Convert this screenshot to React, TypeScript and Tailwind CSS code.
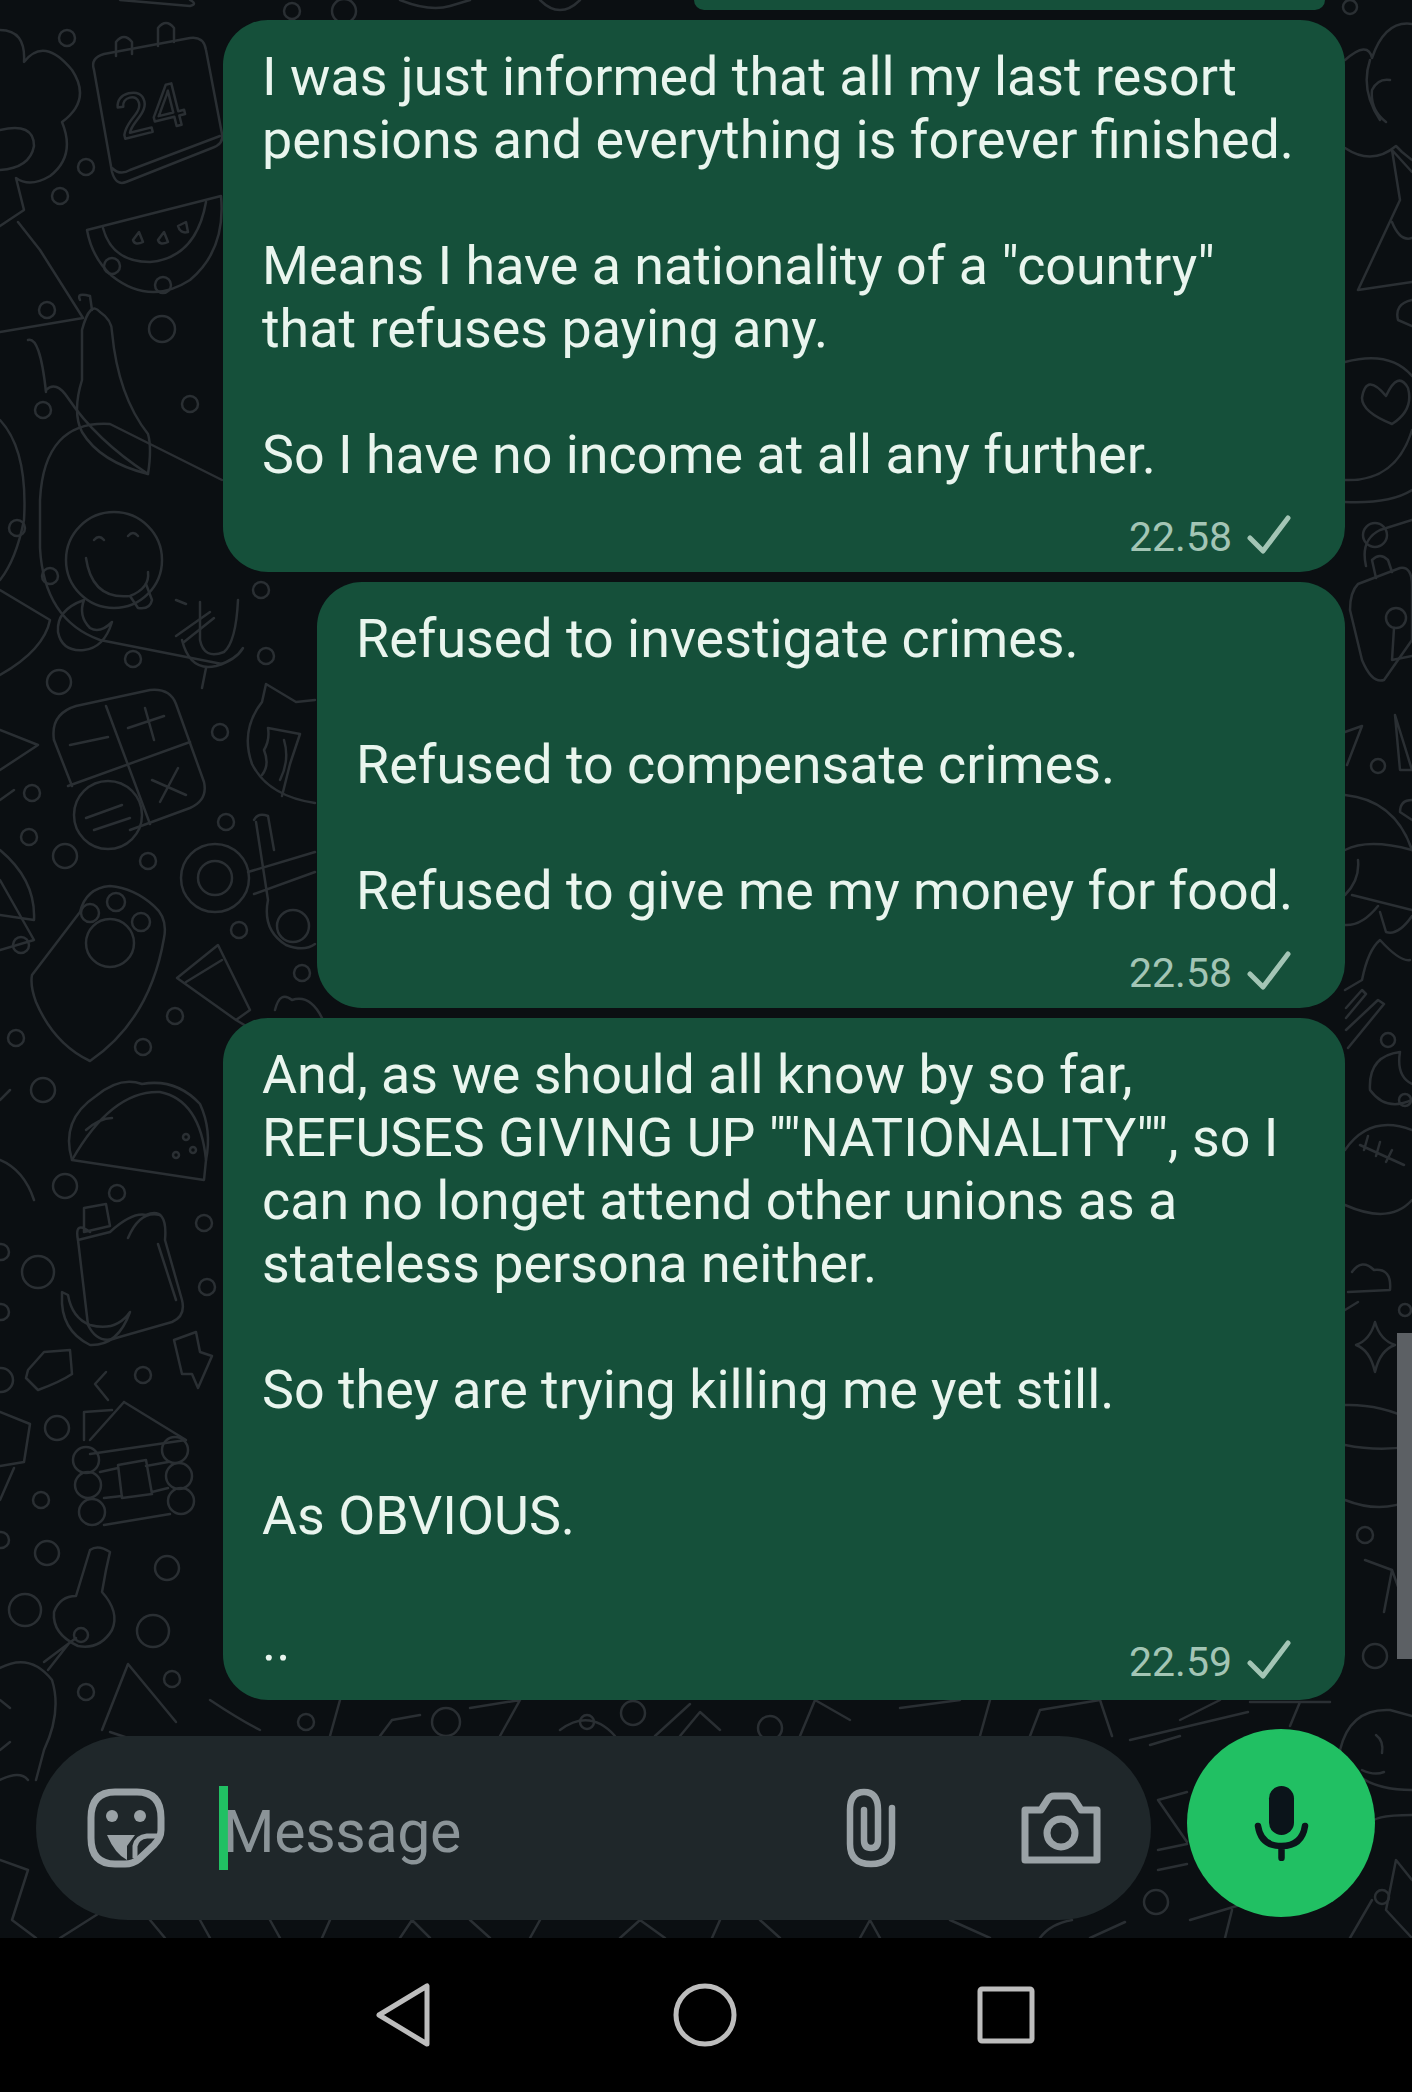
import React from "react";

// small bubbles scattered over the chat wallpaper: [cx, cy, r]
const DOTS: [number, number, number][] = [
  [67, 38, 8], [86, 167, 8], [60, 196, 8], [112, 266, 8], [163, 285, 8], [47, 310, 8],
  [162, 329, 13], [43, 410, 8], [190, 404, 8], [17, 528, 8], [50, 576, 8], [261, 590, 8],
  [292, 11, 8], [344, 11, 12], [133, 659, 8], [59, 682, 12], [266, 656, 8], [220, 732, 8],
  [32, 793, 8], [29, 837, 8], [65, 856, 12], [148, 861, 8], [226, 822, 8], [239, 930, 8],
  [21, 945, 8], [175, 1016, 8], [16, 1038, 8], [143, 1047, 8], [302, 973, 8], [43, 1090, 12],
  [65, 1186, 12], [117, 1193, 8], [204, 1223, 8], [38, 1272, 16], [207, 1287, 8], [143, 1375, 8],
  [57, 1428, 12], [41, 1500, 8], [47, 1553, 12], [167, 1568, 12], [25, 1610, 16], [153, 1631, 16],
  [172, 1679, 8], [86, 1692, 8], [1375, 535, 12], [1378, 766, 7], [1350, 7, 7], [1388, 1040, 7],
  [1365, 1535, 8], [1375, 1656, 12], [306, 1722, 8], [446, 1722, 14], [587, 1722, 7], [633, 1713, 12],
  [770, 1728, 12], [1156, 1902, 12], [1382, 1897, 7], [1, 1252, 8], [1, 1312, 8], [1, 1380, 12],
  [1, 1540, 8], [1405, 1100, 6], [1405, 1310, 6],
];

const Wallpaper = () => (
  <svg
    className="absolute inset-0 h-full w-full"
    viewBox="0 0 1412 1938"
    fill="none"
    stroke="#2a2f33"
    strokeWidth={2.5}
    strokeLinecap="round"
    strokeLinejoin="round"
  >
    {DOTS.map(([cx, cy, r], i) => (
      <circle key={i} cx={cx} cy={cy} r={r} />
    ))}
    {/* calendar */}
    <path d="M94 70Q90 58 104 54L190 38Q204 36 206 50L222 134Q224 144 212 148L126 182Q116 186 112 172Z" />
    <path d="M112 168Q120 176 130 170L220 136" />
    <path d="M116 56V42Q124 32 132 42V54M158 46V28Q166 18 174 28V42" />
    <text x="116" y="132" fontSize="62" fontFamily="Liberation Sans, sans-serif" transform="rotate(-14 150 110)">24</text>
    {/* broccoli */}
    <path d="M0 30Q26 30 24 62Q44 36 72 70Q92 100 62 122Q76 156 50 176Q30 188 16 178L24 210L0 226" />
    <path d="M0 130Q34 122 34 146Q30 168 0 170" />
    {/* pizza slice */}
    <path d="M0 332L83 318L40 250L18 222" />
    {/* watermelon */}
    <path d="M87 230L221 196Q226 250 190 280Q150 306 112 276Q92 258 87 230Z" />
    <path d="M103 228Q112 262 150 262Q196 258 206 202" />
    <path d="M133 240l6-8 4 10q-8 4-10-2zM158 240l6-8 4 10q-8 4-10-2zM178 226l8-4 2 10q-8 2-10-6z" />
    {/* chillies */}
    <path d="M82 330Q90 300 100 312Q112 320 112 332Q118 396 148 434Q152 448 148 474Q100 462 82 432Q72 412 82 380Z" />
    <path d="M46 390Q56 380 68 398Q96 440 148 474" />
    <path d="M80 300Q76 292 90 296L92 310M28 340Q40 336 46 392" />
    {/* blob with smiley */}
    <path d="M222 480L110 424Q44 420 40 500V548Q44 620 100 640L222 664" />
    <circle cx="114" cy="560" r="48" />
    <path d="M86 558Q92 600 130 596Q150 588 148 572M94 540q5-6 10 0M128 536q5-6 10 0" />
    <path d="M130 596l8 12q12 2 14-8l-6-16" />
    <path d="M176 636L210 612M184 642L214 618" />
    {/* left edge shapes */}
    <path d="M0 420Q28 450 24 520Q16 560 0 580" />
    <path d="M0 590L50 620Q44 650 0 675" />
    <path d="M0 800L14 790M0 880L34 940L0 950" />
    {/* moon */}
    <path d="M84 600Q56 610 58 632Q62 652 84 650Q104 648 112 622Q100 634 90 628Q78 616 84 600Z" />
    {/* mic */}
    <path d="M200 602V640Q204 660 224 652Q236 642 238 600" />
    <path d="M182 640Q190 672 216 666Q236 660 243 648M206 668L202 688" />
    <path d="M176 600L186 604M0 730L38 745L0 770" />
    {/* calculator */}
    <path d="M54 740Q50 714 76 706L150 690Q170 688 176 704L204 782Q208 800 190 808L130 830" />
    <path d="M54 740L72 786M106 706L150 824M68 786L190 742M70 745L108 737M128 728L164 716M145 708L154 740M152 780L186 795M178 768L160 802" />
    <circle cx="108" cy="815" r="34" />
    <path d="M86 818L122 805M94 830L130 818" />
    {/* cat */}
    <path d="M315 803Q268 796 252 764Q240 730 262 702L266 684L296 702L315 700" />
    <path d="M268 728L300 734L290 764L282 796M262 775Q270 765 264 750Q270 740 268 728M284 740Q290 760 280 780" />
    {/* scissors */}
    <circle cx="215" cy="878" r="34" />
    <circle cx="215" cy="878" r="17" />
    <path d="M248 872L315 852M254 894L315 872M254 820Q258 812 268 816L274 850M256 822L268 900Q262 930 286 945Q304 952 315 944" />
    <circle cx="293" cy="926" r="16" />
    {/* paw */}
    <path d="M32 975L80 912Q86 888 110 886Q134 888 154 906Q168 918 164 938Q150 1020 90 1061Q54 1044 36 1002Q30 986 32 975Z" />
    <circle cx="110" cy="943" r="24" />
    <circle cx="90" cy="913" r="9" />
    <circle cx="116" cy="902" r="9" />
    <circle cx="141" cy="922" r="9" />
    {/* tube */}
    <path d="M177 978L218 945L250 1010L236 1020ZM186 982L222 960M236 1020L256 1032" />
    <path d="M275 1010Q280 990 292 1000Q310 994 322 1018" />
    {/* left edge */}
    <path d="M0 850Q36 880 34 920L0 915M0 1100L10 1090M0 1160Q24 1170 34 1200" />
    {/* taco */}
    <path d="M72 1160Q60 1120 96 1096Q120 1076 142 1084Q176 1078 200 1104Q212 1130 206 1160L204 1180Z" />
    <path d="M72 1160Q112 1090 160 1092Q200 1100 206 1160M86 1130Q100 1118 112 1118" />
    <circle cx="186" cy="1137" r="3" /><circle cx="176" cy="1155" r="3" /><circle cx="193" cy="1150" r="3" />
    {/* bag */}
    <path d="M78 1240L110 1232Q132 1212 146 1215Q168 1206 165 1240L182 1300Q186 1316 172 1322L116 1338Q98 1345 88 1325Z" />
    <path d="M84 1208L106 1204L110 1226L84 1232ZM78 1240Q74 1220 90 1232M128 1238Q140 1210 160 1215M158 1244L176 1300" />
    {/* banana */}
    <path d="M62 1295Q60 1330 90 1345Q118 1346 130 1312Q116 1332 90 1325Q72 1318 68 1295L62 1292Z" />
    {/* bolt and lego */}
    <path d="M174 1340L196 1332L200 1352L212 1356L198 1388L192 1374L182 1374Z" />
    <path d="M28 1370L44 1352L70 1350L72 1374Q60 1382 38 1390L26 1378Z" />
    {/* cabin */}
    <path d="M84 1412V1440M84 1412L112 1410M124 1402L186 1440L90 1454M90 1440L124 1402M108 1400L95 1384L106 1372" />
    <circle cx="86" cy="1460" r="13" /><circle cx="88" cy="1485" r="13" /><circle cx="92" cy="1512" r="13" />
    <circle cx="175" cy="1450" r="13" /><circle cx="179" cy="1476" r="13" /><circle cx="181" cy="1501" r="13" />
    <path d="M118 1465L146 1460L152 1494L122 1498ZM100 1472L118 1468M146 1466L168 1462M104 1498L122 1496M152 1492L168 1488M104 1525L170 1514" />
    {/* bowl edge */}
    <path d="M0 1412L30 1424L24 1462L0 1466M14 1468L0 1500" />
    {/* key */}
    <path d="M76 1596L90 1550Q98 1544 110 1552L106 1570L102 1592Q120 1612 112 1630Q100 1650 78 1646Q52 1634 54 1612Q60 1596 76 1596Z" />
    <circle cx="81" cy="1635" r="7" />
    <path d="M76 1638L44 1662M70 1642L48 1670" />
    {/* strawberry */}
    <path d="M0 1668Q30 1652 52 1680Q62 1712 44 1750L36 1780M0 1700l10 8M0 1750l10-8" />
    {/* tent */}
    <path d="M102 1730L128 1664L176 1722M110 1732L128 1738" />
    {/* top */}
    <path d="M120 0L190 6Q198 4 190 0M400 0Q430 12 450 6L470 0M540 0Q560 20 580 0" />
    {/* right edge: clouds */}
    <path d="M1345 60Q1368 40 1372 58Q1385 20 1412 24M1370 60Q1360 90 1380 120M1345 148Q1372 166 1396 146L1402 152L1412 160M1390 80Q1378 78 1372 90Q1370 110 1386 122" />
    {/* triangle */}
    <path d="M1358 290L1400 200L1392 150L1412 172M1358 290L1412 282M1412 238Q1400 242 1392 222" />
    <path d="M1412 300Q1394 304 1398 320L1412 326" />
    {/* heart */}
    <path d="M1386 396Q1366 372 1362 398Q1362 412 1392 424Q1414 410 1408 388Q1398 370 1386 396Z" />
    <path d="M1345 362Q1390 350 1412 376M1412 430Q1396 482 1345 480M1345 502Q1390 504 1412 490" />
    {/* lock */}
    <path d="M1358 584L1400 568Q1412 566 1412 586V640L1384 680Q1372 684 1362 660L1350 610Q1350 592 1358 584Z" />
    <path d="M1366 566Q1360 540 1380 530L1412 520M1376 578L1372 560Q1380 552 1388 560L1392 572" />
    <circle cx="1396" cy="618" r="10" />
    <path d="M1394 628L1392 660L1412 656" />
    {/* right edge, mid */}
    <path d="M1347 765L1362 726L1345 732M1395 715L1412 770M1395 715L1400 770L1412 770" />
    <path d="M1345 795Q1395 800 1412 850M1412 800Q1400 800 1400 812L1412 820" />
    <path d="M1345 850Q1368 838 1412 850M1358 860Q1360 880 1345 895M1352 895L1412 910M1380 912L1386 932Q1398 936 1412 916M1345 925Q1362 926 1378 906M1410 960Q1400 962 1380 940Q1368 950 1362 980L1345 990" />
    <path d="M1346 1030L1378 1000L1384 1004L1348 1048M1346 1008L1362 990L1366 994L1346 1018" />
    <path d="M1400 1052Q1368 1056 1370 1090Q1386 1112 1412 1100M1400 1052Q1396 1076 1412 1084" />
    <path d="M1345 1150Q1370 1114 1412 1130M1345 1205Q1390 1225 1412 1200M1360 1145L1404 1165M1368 1136L1364 1150M1380 1142L1376 1156M1392 1150L1386 1162" />
    <path d="M1352 1272Q1362 1258 1374 1270Q1392 1268 1390 1290L1348 1292" />
    <path d="M1375 1322Q1380 1340 1395 1345Q1380 1350 1375 1372Q1370 1350 1356 1345Q1370 1340 1375 1322Z" />
    <path d="M1345 1310L1358 1302" />
    <path d="M1345 1405Q1380 1404 1412 1420M1345 1445Q1380 1452 1412 1446M1345 1500Q1380 1514 1412 1500" />
    <path d="M1365 1560L1392 1570L1400 1592L1412 1580M1392 1570L1384 1612" />
    {/* below the last bubble */}
    <path d="M210 1700Q240 1720 260 1730M340 1700L330 1736M380 1736L392 1720L420 1715M500 1736L520 1700M470 1708L520 1700M560 1730Q590 1708 615 1736M655 1736L690 1704M680 1736L700 1712L720 1730M800 1736L815 1700L850 1720M900 1708L960 1700M980 1736L990 1700M1030 1736L1040 1710L1100 1700L1112 1736" />
    <path d="M1150 1745L1180 1736M1130 1740L1248 1712M1180 1720L1220 1700" />
    {/* around the mic */}
    <path d="M1158 1800L1187 1792M1158 1850L1187 1844M1158 1800L1187 1842M1158 1870L1187 1864" />
    <path d="M1290 1726L1300 1702M1250 1702L1330 1702" />
    <path d="M1340 1750Q1350 1708 1390 1710L1412 1716M1340 1750Q1354 1790 1412 1790M1412 1815Q1370 1815 1370 1825" />
    <path d="M1376 1735q8 6 6 18M1362 1770q12 6 22 2" />
    <path d="M1412 1880L1396 1860L1386 1910L1412 1938M1350 1938L1372 1900" />
    <path d="M1225 1938L1232 1910M1190 1920L1240 1905" />
    {/* under the composer */}
    <path d="M60 1938L120 1900M150 1920L165 1938M200 1920L210 1938M270 1920L280 1938M330 1920L322 1938M400 1938L412 1920L430 1938M470 1920L490 1938M530 1938L540 1920M620 1938L640 1920L665 1938M720 1920L712 1938M760 1920L780 1938M860 1938L870 1920L880 1938M950 1920L990 1938M1040 1938Q1050 1924 1072 1920M1090 1938L1125 1922" />
    <path d="M0 1860L28 1870L12 1920L36 1938" />
    <path d="M0 1780Q20 1770 28 1780" />
  </svg>
);

const Check = () => (
  <svg className="h-[40px] w-[44px]" viewBox="0 0 44 40" fill="none" stroke="#a3c5b5" strokeWidth={5} strokeLinecap="round" strokeLinejoin="round">
    <path d="M3 23L16 36L41 3" />
  </svg>
);

type BubbleProps = { text: string; time: string; width: string; rowClass: string; lead?: string };

const Bubble = ({ text, time, width, rowClass, lead }: BubbleProps) => (
  <div className={`${width} rounded-[45px] bg-[#15503a] pb-[17px] pl-[39px] pr-[30px] pt-[25px]`}>
    <div className="whitespace-pre-line text-[53.8px] leading-[63px] text-[#e9f5ee]">{text}</div>
    <div className={`flex items-end pr-[24px] ${rowClass}`}>
      {lead && <span className="mb-[7px] text-[53.8px] leading-[63px] text-[#e9f5ee]">{lead}</span>}
      <div className="ml-auto flex items-end gap-[15px]">
        <span className="translate-y-[3px] text-[41px] leading-[42px] text-[#a3c5b5]">{time}</span>
        <Check />
      </div>
    </div>
  </div>
);

const Composer = () => (
  <div className="flex h-[184px] w-[1115px] items-center rounded-[92px] bg-[#1f272a] pl-[51px] pr-[50px]">
    <svg className="h-[80px] w-[78px]" viewBox="0 0 78 80" fill="none" stroke="#9aa2a6" strokeWidth={7}>
      <path d="M28 4H50Q74 4 74 30V42Q74 50 67 57L52 71Q46 76 38 76H28Q4 76 4 50V30Q4 4 28 4Z" />
      <circle cx="25" cy="28" r="6" fill="#9aa2a6" stroke="none" />
      <circle cx="53" cy="28" r="6" fill="#9aa2a6" stroke="none" />
      <path d="M20 47H48L40 58V72Q28 66 20 47Z" fill="#9aa2a6" stroke="none" />
      <path d="M48 70V58Q50 49 60 48H72" strokeWidth={5} />
    </svg>
    <div className="ml-[54px] h-[84px] w-[9px] bg-[#21c063]" />
    <span className="-ml-[5px] mt-[7px] text-[59px] leading-[70px] tracking-[-0.3px] text-[#8b9498]">Message</span>
    <svg className="ml-auto h-[80px] w-[50px]" viewBox="0 0 50 80" fill="none" stroke="#9aa2a6" strokeWidth={6.5} strokeLinecap="round">
      <path d="M46 20V56Q46 76 25 76Q4 76 4 56V22Q4 4 18 4Q32 4 32 22V52Q32 60 25 60Q18 60 18 52V22" />
    </svg>
    <svg className="ml-[125px] h-[72px] w-[80px]" viewBox="0 0 80 72" fill="none" stroke="#9aa2a6" strokeWidth={7} strokeLinejoin="round">
      <path d="M4 18H20L27 7Q29 4 33 4H47Q51 4 53 7L60 18H76V68H4Z" />
      <circle cx="40" cy="41" r="14" />
    </svg>
  </div>
);

const MicButton = () => (
  <div className="mb-[3px] flex h-[188px] w-[188px] items-center justify-center rounded-full bg-[#21c063]">
    <svg className="h-[75px] w-[55px]" viewBox="0 0 55 75" fill="none" stroke="#0b141a" strokeWidth={6.5} strokeLinecap="round">
      <rect x="15" y="0" width="25" height="49" rx="12.5" fill="#0b141a" stroke="none" />
      <path d="M4 40Q7 60 27.5 60Q48 60 51 40M27.5 60V72" />
    </svg>
  </div>
);

const NavBar = () => (
  <div className="flex h-[154px] items-center bg-black pl-[376px]">
    <svg className="h-[64px] w-[54px]" viewBox="0 0 54 64" fill="none" stroke="#bdbdbd" strokeWidth={5} strokeLinejoin="round">
      <path d="M51 3V61L3 32Z" />
    </svg>
    <svg className="ml-[243px] h-[64px] w-[64px]" viewBox="0 0 64 64" fill="none" stroke="#bdbdbd" strokeWidth={5}>
      <circle cx="32" cy="32" r="29" />
    </svg>
    <svg className="ml-[240px] h-[58px] w-[58px]" viewBox="0 0 58 58" fill="none" stroke="#bdbdbd" strokeWidth={5} strokeLinejoin="round">
      <rect x="3" y="3" width="52" height="52" rx="2" />
    </svg>
  </div>
);

export default function App() {
  return (
    <div className="flex h-[2092px] w-[1412px] flex-col overflow-hidden bg-black font-['Roboto',sans-serif]">
      <main className="relative flex flex-1 flex-col bg-[#0b0f12]">
        <Wallpaper />
        {/* scrollbar */}
        <div className="absolute right-0 top-[1333px] h-[326px] w-[15px] bg-[#5c6064]" />
        <div className="relative flex flex-1 flex-col items-end gap-[10px] pr-[67px]">
          <div className="mr-[20px] h-[10px] w-[631px] rounded-b-[30px] bg-[#15503a]" />
          <Bubble
            width="w-[1122px]"
            time="22.58"
            rowClass="mt-[27px]"
            text={`I was just informed that all my last resort
pensions and everything is forever finished.

Means I have a nationality of a "country"
that refuses paying any.

So I have no income at all any further.`}
          />
          <Bubble
            width="w-[1028px]"
            time="22.58"
            rowClass="mt-[27px]"
            text={`Refused to investigate crimes.

Refused to compensate crimes.

Refused to give me my money for food.`}
          />
          <Bubble
            width="w-[1122px]"
            time="22.59"
            rowClass="mt-[63px] mb-[3px]"
            lead=".."
            text={`And, as we should all know by so far,
REFUSES GIVING UP ""NATIONALITY"", so I
can no longet attend other unions as a
stateless persona neither.

So they are trying killing me yet still.

As OBVIOUS.`}
          />
        </div>
        <div className="relative flex items-end gap-[36px] pb-[18px] pl-[36px]">
          <Composer />
          <MicButton />
        </div>
      </main>
      <NavBar />
    </div>
  );
}
